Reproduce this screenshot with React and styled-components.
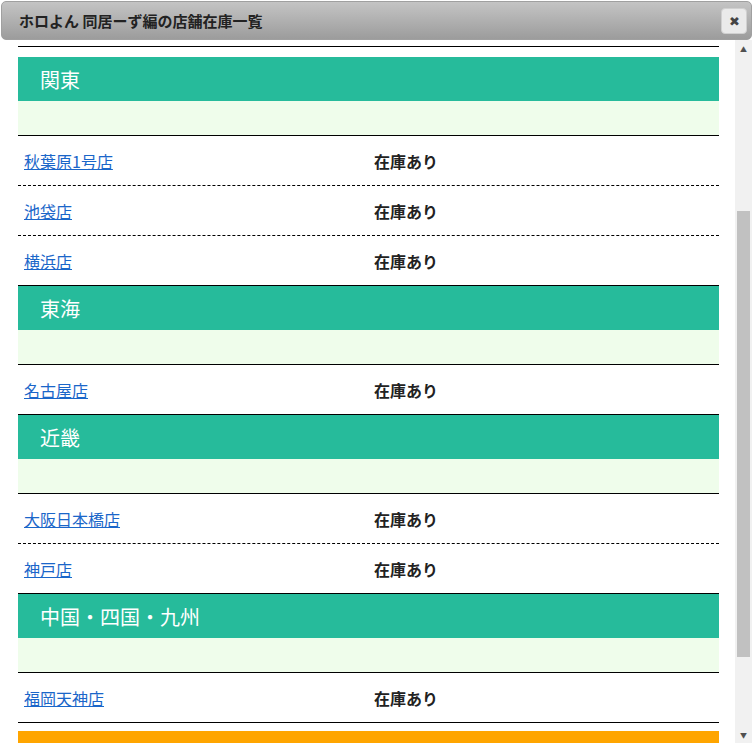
import styled, { createGlobalStyle } from "styled-components";

const Global = createGlobalStyle`
  html, body { margin: 0; padding: 0; background: #fff; }
  body { font-family: "Noto Sans CJK JP", "Liberation Sans", sans-serif; }
`;

const groups = [
  { name: "関東", shops: ["秋葉原1号店", "池袋店", "横浜店"] },
  { name: "東海", shops: ["名古屋店"] },
  { name: "近畿", shops: ["大阪日本橋店", "神戸店"] },
  { name: "中国・四国・九州", shops: ["福岡天神店"] },
];

export default function App() {
  return (
    <>
      <Global />
      <Dialog>
        <TitleBar>
          <Title>ホロよん 同居ーず編の店舗在庫一覧</Title>
          <Close>✖</Close>
        </TitleBar>
        <Body>
          <Content>
            <TopRule />
            {groups.map((g) => (
              <Group key={g.name}>
                <Region>{g.name}</Region>
                <Strip />
                {g.shops.map((s, i) => (
                  <Row key={s} $last={i === g.shops.length - 1}>
                    <ShopLink href="#">{s}</ShopLink>
                    <Stock>在庫あり</Stock>
                  </Row>
                ))}
              </Group>
            ))}
            <Orange />
          </Content>
          <Scrollbar>
            <Arrow>▲</Arrow>
            <Track>
              <Thumb />
            </Track>
            <Arrow>▼</Arrow>
          </Scrollbar>
        </Body>
      </Dialog>
    </>
  );
}

const Dialog = styled.div`
  width: 751px;
  height: 743px;
  margin-left: 1px;
  display: flex;
  flex-direction: column;
  overflow: hidden;
`;

const TitleBar = styled.div`
  height: 39px;
  margin-top: 1px;
  border: 1px solid #a0a0a0;
  border-radius: 5px;
  background: linear-gradient(#c4c4c4, #9c9c9c);
  display: flex;
  align-items: center;
  justify-content: space-between;
  padding: 0 4px 0 17px;
  box-sizing: border-box;
`;

const Title = styled.div`
  font-size: 15px;
  font-weight: 700;
  color: #222;
`;

const Close = styled.div`
  width: 26px;
  height: 26px;
  border-radius: 4px;
  background: #eaeaea;
  border: 1px solid #d0d0d0;
  display: grid;
  place-items: center;
  font-size: 13px;
  color: #444;
  box-sizing: border-box;
`;

const Body = styled.div`
  flex: 1;
  display: flex;
  min-height: 0;
`;

const Content = styled.div`
  flex: 1;
  padding: 6px 16px 0 17px;
  overflow: hidden;
`;

const TopRule = styled.div`
  height: 1px;
  background: #000;
  margin-bottom: 10px;
`;

const Group = styled.div``;

const Region = styled.div`
  height: 44px;
  background: #26bb9b;
  color: #fff;
  font-size: 20px;
  padding-left: 22px;
  display: flex;
  align-items: center;
`;

const Strip = styled.div`
  height: 34px;
  background: #effdeb;
  border-bottom: 1px solid #000;
`;

const Row = styled.div`
  height: 50px;
  display: grid;
  grid-template-columns: 350px 1fr;
  align-items: center;
  padding-left: 6px;
  border-bottom: 1px ${(p) => (p.$last ? "solid" : "dashed")} #000;
  box-sizing: border-box;
  font-size: 16px;
`;

const ShopLink = styled.a`
  color: #1a66c9;
  text-decoration: underline;
`;

const Stock = styled.span`
  font-weight: 700;
  color: #222;
`;

const Orange = styled.div`
  height: 14px;
  background: #ffa500;
  margin-top: 8px;
`;

const Scrollbar = styled.div`
  width: 17px;
  background: #f1f1f1;
  display: flex;
  flex-direction: column;
`;

const Arrow = styled.div`
  height: 17px;
  font-size: 7px;
  color: #505050;
  display: grid;
  place-items: center;
`;

const Track = styled.div`
  flex: 1;
  position: relative;
`;

const Thumb = styled.div`
  position: absolute;
  left: 2px;
  right: 2px;
  top: 154px;
  height: 446px;
  background: #c1c1c1;
`;
